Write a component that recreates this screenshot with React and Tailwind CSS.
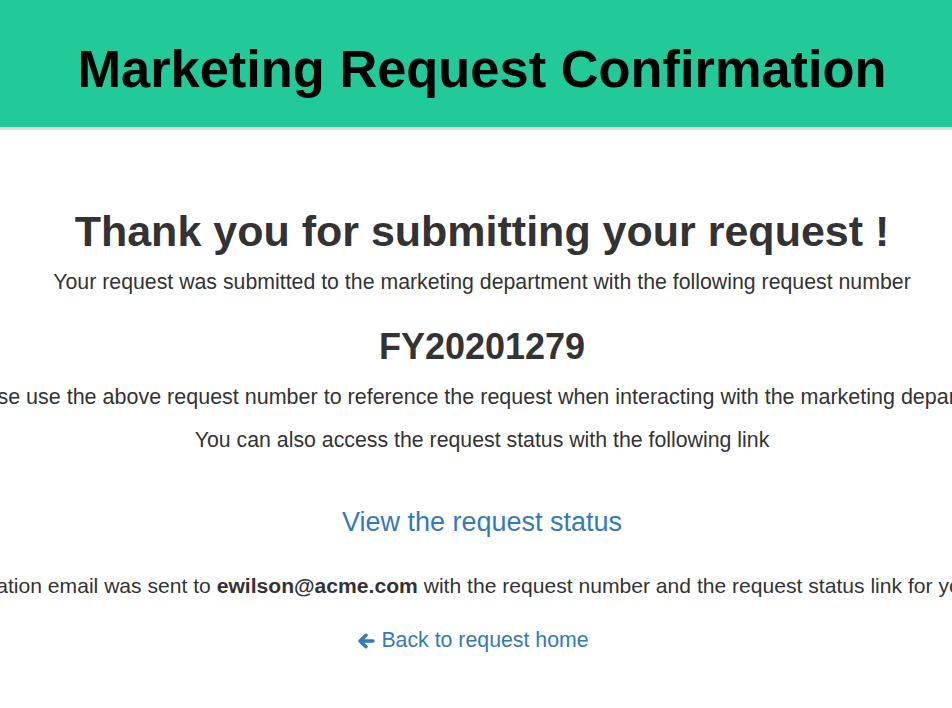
export default function App() {
  return (
    <div className="w-full min-h-[708px] overflow-hidden bg-white" style={{ fontFamily: '"Liberation Sans", Arial, sans-serif' }}>
      <div className="w-[964px]">
        <header className="h-[130px] bg-[#21ca98] border-b-[3px] border-[#dddddd] flex justify-center pt-[43px]">
          <h1 className="text-[52.4px] font-bold text-black leading-none whitespace-nowrap">Marketing Request Confirmation</h1>
        </header>
        <main className="flex flex-col items-center text-[#333333]">
          <h2 className="mt-[80px] text-[43px] font-bold leading-none whitespace-nowrap">Thank you for submitting your request !</h2>
          <p className="mt-[19px] text-[21.3px] leading-none whitespace-nowrap">Your request was submitted to the marketing department with the following request number</p>
          <p className="mt-[36px] text-[36px] font-bold leading-none whitespace-nowrap">FY20201279</p>
          <p className="mt-[22px] text-[21.5px] leading-none whitespace-nowrap">Please use the above request number to reference the request when interacting with the marketing department</p>
          <p className="mt-[21px] text-[21.3px] leading-none whitespace-nowrap">You can also access the request status with the following link</p>
          <a href="#" className="mt-[58px] text-[27px] leading-none text-[#337ab7] whitespace-nowrap">View the request status</a>
          <p className="mt-[39px] text-[21.1px] leading-none whitespace-nowrap">A confirmation email was sent to <b>ewilson@acme.com</b> with the request number and the request status link for your records</p>
          <a href="#" className="mt-[34px] pr-[18px] text-[21.3px] leading-none text-[#337ab7] whitespace-nowrap flex items-center gap-[6px]">
            <svg width="18" height="16" viewBox="0 0 18 16" fill="none" stroke="#337ab7" strokeWidth="3.4" strokeLinecap="round" strokeLinejoin="round">
              <path d="M16 8H3.5 M9 2.2 3 8l6 5.8" />
            </svg>
            Back to request home
          </a>
        </main>
      </div>
    </div>
  );
}
